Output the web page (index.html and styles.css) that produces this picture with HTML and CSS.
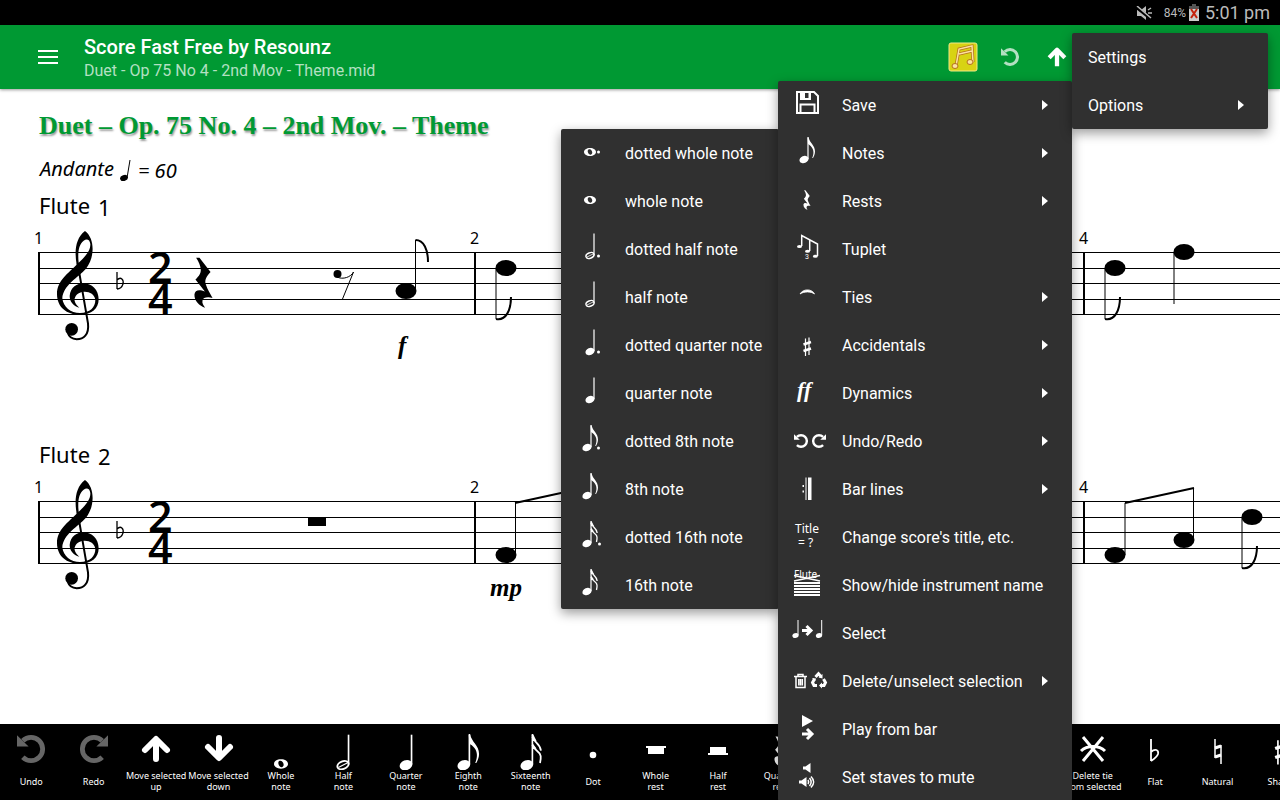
FILE: index.html
```
<!DOCTYPE html>
<html lang="en">

<head>
  <meta charset="UTF-8">
  <meta name="viewport" content="width=device-width, initial-scale=1.0">
  <title>Score Fast Free by Resounz</title>
  <link rel="stylesheet" href="styles.css">
</head>

<body>
  <!-- shared shapes -->
  <svg class="defs" aria-hidden="true">
    <symbol id="undo" viewBox="0 0 82 82">
      <path d="M17 65A34 34 0 1 0 17 17" fill="none" stroke="currentColor" stroke-width="14" />
      <path d="M0 1V34H34Z" fill="currentColor" />
    </symbol>
    <symbol id="redo" viewBox="0 0 82 82">
      <path d="M65 65A34 34 0 1 1 65 17" fill="none" stroke="currentColor" stroke-width="14" />
      <path d="M82 1V34H48Z" fill="currentColor" />
    </symbol>
    <symbol id="arrow" viewBox="0 0 28 28">
      <path d="M14 27V5M3 15L14 4L25 15" fill="none" stroke="currentColor" stroke-width="6" stroke-linejoin="round" />
    </symbol>
    <symbol id="quarter-rest" viewBox="584 110 56 152">
      <path fill="currentColor" d="M590 112L600 112L633 155C622 168 614 178 619 192C624 207 632 220 639 232C625 228 610 230 609 240C607 248 612 255 617 261C600 257 584 240 585 222C586 208 600 206 616 213L588 177C600 166 604 158 604 148C603 135 598 125 590 112Z" />
    </symbol>
    <symbol id="whole" viewBox="0 0 12 8">
      <path fill="currentColor" fill-rule="evenodd" d="M6 0C9.500 0 12 1.800 12 4S9.500 8 6 8S0 6.200 0 4S2.500 0 6 0ZM5 1.300C3.500 1.800 3.400 3.500 4.200 5C5 6.500 6.200 7 7.200 6.500C8.500 5.800 8.500 4.300 7.800 3C7.200 1.600 6 1 5 1.300Z" />
    </symbol>
    <g id="half">
      <path d="M17 0.500V22" stroke="currentColor" stroke-width="1.200" />
      <ellipse cx="13" cy="22.500" rx="4.200" ry="2.700" transform="rotate(-22 13 22.500)" fill="none" stroke="currentColor" stroke-width="1.400" />
      <path d="M10 24L16 21" stroke="currentColor" stroke-width="0.800" />
    </g>
    <g id="quarter">
      <path d="M17 0.500V22" stroke="currentColor" stroke-width="1.200" />
      <ellipse cx="13" cy="22.500" rx="4.700" ry="3.600" transform="rotate(-22 13 22.500)" fill="currentColor" />
    </g>
    <g id="eighth">
      <path d="M14 0.500V22" stroke="currentColor" stroke-width="1.200" />
      <ellipse cx="10" cy="22.500" rx="4.700" ry="3.600" transform="rotate(-22 10 22.500)" fill="currentColor" />
      <path d="M13.500 0H14.500C15.500 6 21 8 21 14.500C21 17 20 19 19 21H18.200C20 17 20 13 17.500 10C16.500 8.500 15 7.500 14 7Z" fill="currentColor" />
    </g>
    <g id="sixteenth">
      <path d="M14 0.500V22" stroke="currentColor" stroke-width="1.200" />
      <ellipse cx="10" cy="22.500" rx="4.700" ry="3.600" transform="rotate(-22 10 22.500)" fill="currentColor" />
      <path d="M14 2C15 6 19.500 6.500 20.200 12M14 8C15 12 19.500 12 20 16C20.200 18 20 19 19.500 21" fill="none" stroke="currentColor" stroke-width="1.300" />
      <path d="M13.500 0H14.500L17 5L14 5ZM14 6.500L17 10.500L14 11Z" fill="currentColor" />
    </g>
    <g id="sharp" fill="none" stroke="currentColor">
      <path d="M11.500 9.500V27M15 8.500V26" stroke-width="1.200" />
      <path d="M9.500 15.500L17 13M9.500 22L17 19.500" stroke-width="2.400" />
    </g>
    <g id="clef" transform="scale(0.3333)">
      <path d="M255 33C285 55 285 112 258 146C235 172 190 195 187 235C190 262 212 279 240 279C270 278 286 262 286 240C284 222 268 214 252 215C232 217 222 230 224 243C226 252 232 258 238 263C220 258 209 245 209 228C211 202 232 190 250 190C276 190 296 210 296 238C296 266 275 284 240 284C200 284 171 262 171 222C171 182 205 160 232 132C260 106 272 90 271 72C269 55 258 57 251 62C235 74 233 100 236 128L230 134C223 95 226 55 255 33Z" />
      <path d="M233 130L264 310C268 345 250 358 230 358C215 357 207 350 204 340" fill="none" stroke="#000" stroke-width="6" />
      <circle cx="215" cy="328" r="19" />
    </g>
    <g id="flat">
      <path d="M117 52V69M117 60C121 56 124 60 123 64C122 67 120 69 117 69" fill="none" stroke="currentColor" stroke-width="1.300" />
    </g>
    <g id="speaker">
      <path d="M0 3.500H2.500L7.500 0V10L2.500 6.500H0Z" fill="currentColor" />
    </g>
  </svg>

  <div class="page">
    <div class="status">
      <svg class="mute" viewBox="0 0 16 14" aria-hidden="true">
        <path d="M1 4H5L10 0V14L5 10H1Z" fill="#bbb" />
        <path d="M0 1L15 13" stroke="#000" stroke-width="3" />
        <path d="M1 0L15 12M12 4L15 2M12 7H16" stroke="#bbb" stroke-width="1.500" />
      </svg>
      <span class="percent">84%</span>
      <svg class="battery" viewBox="0 0 10 17" aria-hidden="true">
        <path d="M3 0H7V2H10V17H0V2H3Z" fill="#ccc" />
        <path d="M3 0H7V2H10V5H0V2H3Z" fill="#555" />
        <path d="M2 5L8 14M8 5L2 14" stroke="#c4220c" stroke-width="2" />
      </svg>
      <span class="clock">5:01 pm</span>
    </div>

    <header class="appbar">
      <button class="burger" aria-label="Menu"><span></span><span></span><span></span></button>
      <div class="heading">
        <h1>Score Fast Free by Resounz</h1>
        <p>Duet - Op 75 No 4 - 2nd Mov - Theme.mid</p>
      </div>
      <button class="action" aria-label="Score">
        <svg width="30" height="30" viewBox="0 0 30 30">
          <rect x="1" y="1" width="28" height="28" rx="2" fill="#d8d313" stroke="#f0e88a" />
          <path d="M8 24L11 7L24 4L25 20M11 12L24 9" fill="none" stroke="#b5701c" stroke-width="3" />
          <path d="M8 24L11 7L24 4L25 20M11 12L24 9" fill="none" stroke="#fbe2a0" stroke-width="1.500" />
          <ellipse cx="7" cy="24" rx="3" ry="2.500" fill="#fbe2a0" stroke="#b5701c" />
          <ellipse cx="22" cy="20" rx="3" ry="2.500" fill="#fbe2a0" stroke="#b5701c" />
        </svg>
      </button>
      <button class="action dim" aria-label="Undo"><svg width="18" height="18"><use href="#undo" /></svg></button>
      <button class="action" aria-label="Move up"><svg width="20" height="20"><use href="#arrow" /></svg></button>
    </header>

    <main class="score">
      <h2>Duet – Op. 75 No. 4 – 2nd Mov. – Theme</h2>
      <div class="tempo">
        <span>Andante</span>
        <svg width="14" height="24" viewBox="0 0 14 24" aria-hidden="true">
          <path d="M8 21L11 3" stroke="#000" />
          <ellipse cx="5" cy="21" rx="4" ry="3" transform="rotate(-20 5 21)" />
        </svg>
        <span class="low">= 60</span>
      </div>

      <section class="part">
        <h3>Flute <span class="low">1</span></h3>
        <svg class="staff">
          <g class="lines">
            <line x1="39" x2="100%" y1="32" y2="32" />
            <line x1="39" x2="100%" y1="48" y2="48" />
            <line x1="39" x2="100%" y1="63" y2="63" />
            <line x1="39" x2="100%" y1="79" y2="79" />
            <line x1="39" x2="100%" y1="94" y2="94" />
          </g>
          <path class="bar" d="M39 32V95M475 32V95M1084 32V95" />
          <text class="num" x="34" y="24">1</text>
          <text class="num" x="470" y="24">2</text>
          <text class="num" x="1079" y="24">4</text>
          <use href="#clef" />
          <use href="#flat" />
          <text class="time" x="148" y="63">2</text>
          <text class="time" x="148" y="95">4</text>
          <use href="#quarter-rest" x="194" y="37" width="19" height="51" />
          <circle cx="337.500" cy="54" r="4" />
          <path class="stem" d="M337 57C343 60 351 57 353.500 52L342.500 79" />
          <ellipse cx="406" cy="71" rx="10.500" ry="8" />
          <path class="stem" d="M415.500 71V20" />
          <path class="flag" d="M415.500 20C424 20 428 30 428 42" />
          <ellipse cx="506" cy="48" rx="10.500" ry="8" />
          <path class="stem" d="M496 48V99" />
          <path class="flag" d="M496 99C506 101 511 90 511 77" />
          <ellipse cx="1115" cy="48" rx="10.500" ry="8" />
          <path class="stem" d="M1105 48V99" />
          <path class="flag" d="M1105 99C1115 101 1120 90 1120 77" />
          <ellipse cx="1184" cy="32" rx="10.500" ry="8" />
          <path class="stem" d="M1174 32V84" />
          <text class="dynamic" x="398" y="134">f</text>
        </svg>
      </section>

      <section class="part">
        <h3>Flute <span class="low">2</span></h3>
        <svg class="staff">
          <g class="lines">
            <line x1="39" x2="100%" y1="32" y2="32" />
            <line x1="39" x2="100%" y1="48" y2="48" />
            <line x1="39" x2="100%" y1="63" y2="63" />
            <line x1="39" x2="100%" y1="79" y2="79" />
            <line x1="39" x2="100%" y1="94" y2="94" />
          </g>
          <path class="bar" d="M39 32V95M475 32V95M1084 32V95" />
          <text class="num" x="34" y="24">1</text>
          <text class="num" x="470" y="24">2</text>
          <text class="num" x="1079" y="24">4</text>
          <use href="#clef" />
          <use href="#flat" />
          <text class="time" x="148" y="63">2</text>
          <text class="time" x="148" y="95">4</text>
          <rect x="308" y="48" width="18" height="9" />
          <ellipse cx="506" cy="86" rx="10.500" ry="8" />
          <path class="stem" d="M515.500 86V34" />
          <path class="flag" d="M515 34L584 19" />
          <ellipse cx="1115" cy="86" rx="10.500" ry="8" />
          <path class="stem" d="M1125 86V34" />
          <path class="flag" d="M1125 34L1194 19" />
          <ellipse cx="1184" cy="71" rx="10.500" ry="8" />
          <path class="stem" d="M1193.500 71V19" />
          <ellipse cx="1252" cy="48" rx="10.500" ry="8" />
          <path class="stem" d="M1242 48V99" />
          <path class="flag" d="M1242 99C1252 101 1257 90 1257 77" />
          <text class="dynamic" x="490" y="127">mp</text>
        </svg>
      </section>
    </main>

    <footer class="toolbar">
      <button class="tool off"><svg viewBox="0 0 36 36"><use href="#undo" x="4" y="1" width="28" height="28" /></svg><span>Undo</span></button>
      <button class="tool off"><svg viewBox="0 0 36 36"><use href="#redo" x="4" y="1" width="28" height="28" /></svg><span>Redo</span></button>
      <button class="tool"><svg viewBox="0 0 36 36"><path class="fat" d="M18 25V6M7 16L18 5L29 16" /></svg><span>Move selected<br>up</span></button>
      <button class="tool"><svg viewBox="0 0 36 36"><path class="fat" d="M18 4V23M7 13L18 24L29 13" /></svg><span>Move selected<br>down</span></button>
      <button class="tool"><svg viewBox="0 0 36 36"><use href="#whole" x="11" y="25" width="14" height="10" /></svg><span>Whole<br>note</span></button>
      <button class="tool"><svg viewBox="0 0 26 26"><use href="#half" /></svg><span>Half<br>note</span></button>
      <button class="tool"><svg viewBox="0 0 26 26"><use href="#quarter" /></svg><span>Quarter<br>note</span></button>
      <button class="tool"><svg viewBox="0 0 26 26"><use href="#eighth" /></svg><span>Eighth<br>note</span></button>
      <button class="tool"><svg viewBox="0 0 26 26"><use href="#sixteenth" /></svg><span>Sixteenth<br>note</span></button>
      <button class="tool"><svg viewBox="0 0 36 36"><circle cx="18" cy="21" r="3.300" fill="currentColor" /></svg><span>Dot</span></button>
      <button class="tool"><svg viewBox="0 0 36 36"><path d="M8 12H28V14H26V20H10V14H8Z" fill="currentColor" /></svg><span>Whole<br>rest</span></button>
      <button class="tool"><svg viewBox="0 0 36 36"><path d="M8 21V19H10V13H26V19H28V21Z" fill="currentColor" /></svg><span>Half<br>rest</span></button>
      <button class="tool"><svg viewBox="0 0 36 36"><use href="#quarter-rest" x="12" y="2" width="12" height="31" /></svg><span>Quarter<br>rest</span></button>
      <button class="tool tie"><svg viewBox="0 0 36 36"><path d="M8 3L28 27M28 3L8 27M6 17C12 11 24 11 30 17" fill="none" stroke="currentColor" stroke-width="3" /></svg><span>Delete tie<br>from selected</span></button>
      <button class="tool"><svg viewBox="0 0 36 36"><path d="M14 5V27M14 18C18 14 22 16 21 20C20 23 17 25 14 27" fill="none" stroke="currentColor" stroke-width="1.800" /></svg><span>Flat</span></button>
      <button class="tool"><svg viewBox="0 0 36 36"><path d="M15 5V24M21 11V30" fill="none" stroke="currentColor" stroke-width="1.500" /><path d="M15 14L21 12M15 23L21 21" stroke="currentColor" stroke-width="3" /></svg><span>Natural</span></button>
      <button class="tool"><svg viewBox="0 0 26 26"><use href="#sharp" y="-5" /></svg><span>Sharp</span></button>
    </footer>
  </div>

  <ul class="menu menu-notes">
    <li><button><svg class="icon"><use href="#whole" x="7" y="11" width="12" height="8" /><circle cx="21.500" cy="15" r="1.500" /></svg>dotted whole note</button></li>
    <li><button><svg class="icon"><use href="#whole" x="7" y="11" width="12" height="8" /></svg>whole note</button></li>
    <li><button><svg class="icon"><use href="#half" /><circle cx="21.500" cy="23" r="1.500" /></svg>dotted half note</button></li>
    <li><button><svg class="icon"><use href="#half" /></svg>half note</button></li>
    <li><button><svg class="icon"><use href="#quarter" /><circle cx="21.500" cy="23" r="1.500" /></svg>dotted quarter note</button></li>
    <li><button><svg class="icon"><use href="#quarter" /></svg>quarter note</button></li>
    <li><button><svg class="icon"><use href="#eighth" /><circle cx="21.500" cy="23" r="1.500" /></svg>dotted 8th note</button></li>
    <li><button><svg class="icon"><use href="#eighth" /></svg>8th note</button></li>
    <li><button><svg class="icon"><use href="#sixteenth" /><circle cx="22.500" cy="23" r="1.500" /></svg>dotted 16th note</button></li>
    <li><button><svg class="icon"><use href="#sixteenth" /></svg>16th note</button></li>
  </ul>

  <ul class="menu menu-main">
    <li><button class="more">
      <svg class="icon"><path class="line bold" d="M3 3H20L24 7V24H3ZM6.500 24V15.500H20.500V24" /><path fill-rule="evenodd" d="M6 3H17V11H6ZM11 4V9H14.500V4Z" /></svg>Save</button></li>
    <li><button class="more"><svg class="icon"><use href="#eighth" /></svg>Notes</button></li>
    <li><button class="more"><svg class="icon"><use href="#quarter-rest" x="9" y="5" width="8" height="20" /></svg>Rests</button></li>
    <li><button>
      <svg class="icon"><path class="line" d="M7.700 13V2.500L23.500 11V23M15.700 18V7" /><ellipse cx="5.500" cy="13.500" rx="2.500" ry="1.500" /><ellipse cx="13.500" cy="18.300" rx="2.500" ry="1.500" /><ellipse cx="21.300" cy="23.300" rx="2.500" ry="1.500" /><text class="tiny" x="11" y="26">3</text></svg>Tuplet</button></li>
    <li><button class="more"><svg class="icon"><path d="M6 13C9 7.500 18 7.500 20.500 13C17 10.200 10 10.200 6 13Z" stroke="currentColor" stroke-width="0.800" /></svg>Ties</button></li>
    <li><button class="more"><svg class="icon"><use href="#sharp" /></svg>Accidentals</button></li>
    <li><button class="more"><svg class="icon"><text class="forte" x="3" y="20">ff</text></svg>Dynamics</button></li>
    <li><button class="more"><svg class="icon"><use href="#undo" y="9" width="14" height="14" /><use href="#redo" x="18" y="9" width="14" height="14" /></svg>Undo/Redo</button></li>
    <li><button class="more"><svg class="icon"><path d="M11.500 4.500H12.500V27H11.500ZM14 4.500H17.500V27H14ZM8.500 12H10V14H8.500ZM8.500 17.500H10V19.500H8.500Z" /></svg>Bar lines</button></li>
    <li><button><svg class="icon"><text class="label" x="1" y="12">Title</text><text class="label" x="4" y="26">= ?</text></svg>Change score's title, etc.</button></li>
    <li><button>
      <svg class="icon"><text class="label small" x="0" y="9">Flute</text><path class="line" d="M0 6.500L26 12M26 6.500L0 12" /><path d="M0 14H26M0 17H26M0 20H26M0 23H26M0 26H26" stroke="currentColor" stroke-width="2" /></svg>Show/hide instrument name</button></li>
    <li><button>
      <svg class="icon"><path d="M4 3V18M27.700 3V18" stroke="currentColor" /><ellipse cx="1.500" cy="18.500" rx="3.200" ry="2.400" transform="rotate(-20 1.500 18.500)" /><ellipse cx="25" cy="18.500" rx="3.200" ry="2.400" transform="rotate(-20 25 18.500)" /><path class="line thick" d="M8 13.500H17M12.500 9L17 13.500L12.500 18" /></svg>Select</button></li>
    <li><button class="more">
      <svg class="icon"><path class="line" d="M0 11.500H13M4 11V9.500H9V11M2 12V22.500H11V12M4.800 14V20.500M6.500 14V20.500M8.300 14V20.500" /><path class="line thick" d="M21.500 12L24.500 8.800L27 11.500M20.500 14L18.500 17.500L20 20.500H23M26.500 20.500H30L31.500 17.500L29.500 14" /><path d="M28.500 9V13.500L24.500 12.500ZM18 13L22 13.500L21 16.500ZM25 20.500L28 17.500V23.500Z" /></svg>Delete/unselect selection</button></li>
    <li><button><svg class="icon"><path d="M8 2L19 8L8 14Z" /><path class="line thick" d="M8 21H18M13 16L18 21L13 26" /></svg>Play from bar</button></li>
    <li><button>
      <svg class="icon"><use href="#speaker" x="9" y="2" /><use href="#speaker" x="5" y="16" /><path class="line" d="M14 19C15 20.500 15 21.500 14 23M15.500 17C18 20 18 22 15.500 25M17 15.500C20.500 19 20.500 23 17 26.500" /></svg>Set staves to mute</button></li>
  </ul>

  <ul class="menu menu-top">
    <li><button>Settings</button></li>
    <li><button class="more">Options</button></li>
  </ul>
</body>

</html>
```
FILE: styles.css
```
* {
  box-sizing: border-box;
}

body {
  margin: 0;
  height: 100vh;
  position: relative;
  overflow: hidden;
  font-family: Roboto, sans-serif;
  background: #fff;
}

button {
  border: none;
  padding: 0;
  background: none;
  color: inherit;
  font: inherit;
  cursor: pointer;
}

h1,
h2,
h3,
p,
ul {
  margin: 0;
  padding: 0;
  font-weight: normal;
}

.defs {
  position: absolute;
  width: 0;
  height: 0;
}

.page {
  display: flex;
  flex-direction: column;
  height: 100%;
}

/* status bar */
.status {
  display: flex;
  align-items: center;
  justify-content: flex-end;
  flex: none;
  height: 25px;
  padding-right: 10px;
  background: #000;
  color: #bbb;
}

.mute {
  width: 16px;
  height: 14px;
  margin-right: 12px;
}

.percent {
  font-size: 12px;
}

.battery {
  width: 10px;
  height: 17px;
  margin: 0 6px 0 3px;
}

.clock {
  font-size: 18px;
}

/* app bar */
.appbar {
  display: flex;
  align-items: center;
  flex: none;
  height: 64px;
  padding: 0 200px 0 38px;
  background: #009933;
  color: #fff;
  box-shadow: 0 1px 3px rgba(0, 0, 0, 0.4);
  z-index: 1;
}

.burger {
  display: flex;
  flex-direction: column;
  gap: 4px;
  width: 20px;
  margin-right: 26px;
}

.burger span {
  height: 2px;
  background: #fff;
}

.heading {
  flex: 1;
  padding-top: 4px;
}

.heading h1 {
  font-size: 20px;
  line-height: 24px;
  font-weight: 500;
}

.heading p {
  font-size: 16px;
  line-height: 24px;
  color: #b3e0c2;
}

.action {
  display: flex;
  align-items: center;
  justify-content: center;
  width: 47px;
  height: 48px;
}

.dim {
  color: #b3e0c2;
}

/* score */
.score {
  flex: 1;
  min-height: 0;
  overflow: hidden;
  padding-top: 16px;
  font-family: "Noto Sans", "Open Sans", sans-serif;
}

.score h2 {
  padding-left: 39px;
  font-family: "Liberation Serif", serif;
  font-size: 26px;
  line-height: 42px;
  font-weight: bold;
  color: #009933;
  text-shadow: 1px 2px 2px rgba(0, 0, 0, 0.4);
}

.tempo {
  display: flex;
  align-items: center;
  gap: 5px;
  height: 43px;
  padding: 0 0 0 40px;
  font-size: 20px;
  font-style: italic;
}

.low {
  padding-top: 4px;
}

.part h3 {
  display: flex;
  align-items: center;
  gap: 8px;
  height: 30px;
  padding-left: 39px;
  font-size: 22px;
}

.staff {
  display: block;
  width: 100%;
  height: 219px;
}

.lines {
  stroke: #000;
  stroke-width: 1;
  shape-rendering: crispEdges;
}

.bar {
  fill: none;
  stroke: #000;
  stroke-width: 2;
}

.stem {
  fill: none;
  stroke: #000;
  stroke-width: 1;
}

.flag {
  fill: none;
  stroke: #000;
  stroke-width: 2;
}

.num {
  font-size: 16px;
}

.time {
  font-family: "Open Sans", "Noto Sans", sans-serif;
  font-size: 43px;
  font-weight: 600;
}

.dynamic {
  font-family: "Liberation Serif", serif;
  font-size: 25px;
  font-style: italic;
  font-weight: bold;
}

/* bottom toolbar */
.toolbar {
  display: grid;
  grid-template-columns: repeat(21, calc(100% / 20.5));
  flex: none;
  height: 76px;
  background: #000;
  color: #fff;
  overflow: hidden;
}

.tool {
  display: flex;
  flex-direction: column;
  align-items: center;
  padding-top: 10px;
}

.tool svg {
  width: 36px;
  height: 36px;
  flex: none;
}

.tool span {
  display: flex;
  align-items: center;
  justify-content: center;
  height: 22px;
  font-family: "Noto Sans", "Open Sans", sans-serif;
  font-size: 9px;
  line-height: 11px;
  white-space: nowrap;
}

.tie {
  grid-column: 18;
}

.off svg {
  color: #666;
}

.fat {
  fill: none;
  stroke: currentColor;
  stroke-width: 6;
  stroke-linecap: round;
  stroke-linejoin: round;
}

/* menus */
.menu {
  position: absolute;
  list-style: none;
  background: #303030;
  color: #fff;
  border-radius: 2px;
  box-shadow: 0 4px 12px rgba(0, 0, 0, 0.4);
  z-index: 2;
}

.menu button {
  display: flex;
  align-items: center;
  width: 100%;
  height: 48px;
  padding: 0 16px;
  font-size: 16px;
  white-space: nowrap;
}

.menu .more::after {
  content: "";
  margin-left: auto;
  margin-right: 8px;
  border-left: 6px solid #fff;
  border-top: 5px solid transparent;
  border-bottom: 5px solid transparent;
}

.menu-top {
  top: 33px;
  right: 12px;
  width: 196px;
}

.menu-main {
  top: 81px;
  right: 208px;
  width: 294px;
}

.menu-notes {
  top: 129px;
  right: 501px;
  width: 218px;
}

.icon {
  flex: none;
  width: 32px;
  height: 32px;
  margin-right: 16px;
  overflow: visible;
  fill: currentColor;
}

.line {
  fill: none;
  stroke: currentColor;
  stroke-width: 1.5;
}

.bold {
  stroke-width: 2;
}

.thick {
  stroke-width: 3;
}

.label {
  font-family: "Noto Sans", "Open Sans", sans-serif;
  font-size: 12px;
}

.small {
  font-size: 10px;
}

.tiny {
  font-size: 7px;
}

.forte {
  font-family: "Liberation Serif", serif;
  font-size: 22px;
  font-style: italic;
  font-weight: bold;
}
```
